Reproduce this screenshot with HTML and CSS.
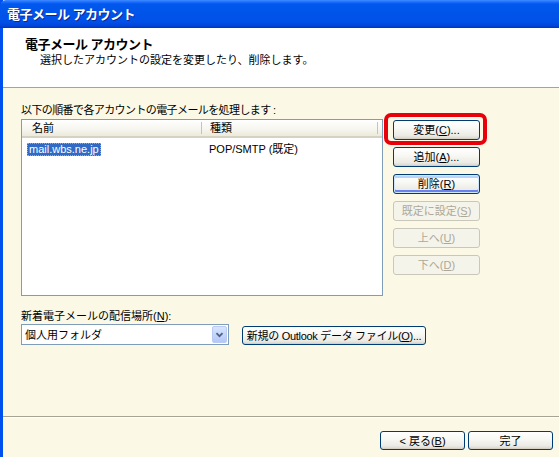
FILE: index.html
```html
<!DOCTYPE html>
<html lang="ja">
<head>
<meta charset="utf-8">
<title>電子メール アカウント</title>
<link rel="stylesheet" href="styles.css">
</head>
<body>
<div class="window">
  <div class="titlebar">電子メール アカウント</div>
  <div class="header">
    <div class="h-title">電子メール アカウント</div>
    <div class="h-sub">選択したアカウントの設定を変更したり、削除します。</div>
  </div>
  <div class="content">
    <div class="label tight">以下の順番で各アカウントの電子メールを処理します :</div>
    <div class="listrow">
      <div class="listbox">
        <div class="lv-head">
          <div class="col c1">名前</div>
          <div class="col c2">種類</div>
          <div class="col c3"></div>
        </div>
        <div class="lv-row">
          <div class="cell c1"><span class="sel">mail.wbs.ne.jp</span></div>
          <div class="cell c2">POP/SMTP (既定)</div>
        </div>
      </div>
      <div class="btncol">
        <div class="hl-wrap">
          <button class="btn">変更(<u>C</u>)...</button>
          <span class="highlight"></span>
        </div>
        <button class="btn">追加(<u>A</u>)...</button>
        <button class="btn default">削除(<u>R</u>)</button>
        <button class="btn" disabled>既定に設定(<u>S</u>)</button>
        <button class="btn" disabled>上へ(<u>U</u>)</button>
        <button class="btn" disabled>下へ(<u>D</u>)</button>
      </div>
    </div>
    <div class="label label2">新着電子メールの配信場所(<u>N</u>):</div>
    <div class="comborow">
      <div class="combo">
        <span class="combo-text">個人用フォルダ</span>
        <span class="combo-btn"><svg width="15" height="17" viewBox="0 0 15 17"><path d="M4 7 L7.5 10.5 L11 7" fill="none" stroke="#4D6185" stroke-width="2"/></svg></span>
      </div>
      <button class="btn wide">新規の Outlook データ ファイル(<u>O</u>)...</button>
    </div>
  </div>
  <div class="footer">
    <button class="btn fbtn">&lt; 戻る(<u>B</u>)</button>
    <button class="btn fbtn">完了</button>
  </div>
</div>
</body>
</html>
```

FILE: styles.css
```css
* { box-sizing: border-box; }
html, body { margin: 0; padding: 0; }
body {
  font-family: "Liberation Sans", "Noto Sans CJK JP", sans-serif;
  font-size: 12px;
  color: #000;
  background: #FBF9E6;
}
.window {
  height: 457px;
  width: 559px;
  display: flex;
  flex-direction: column;
  border-left: 3px solid #0050F0;
  background: #FBF9E6;
  position: relative;
}
.titlebar {
  height: 28px;
  margin-left: -3px;
  padding-left: 7px;
  line-height: 30px;
  font-size: 13px;
  font-weight: bold;
  letter-spacing: -0.5px;
  color: #fff;
  text-shadow: 1px 1px 0 #0A2A9A;
  background: linear-gradient(to bottom, #3D8BFF 0, #1E6CFF 2px, #0058EE 4px, #0054E8 14px, #0050E8 22px, #0044D8 26px, #0033B8 28px);
  border-top-left-radius: 6px;
}
.header {
  height: 60px;
  background: #fff;
  border-bottom: 1px solid #A7A495;
  padding: 9px 0 0 22px;
}
.h-title {
  font-weight: bold;
  font-size: 13px;
  line-height: 16px;
  letter-spacing: -0.5px;
}
.h-sub {
  font-size: 11px;
  line-height: 15px;
  margin-left: 15px;
}
.content {
  flex: 1;
  padding: 14px 0 0 18px;
}
.label {
  font-size: 11px;
  line-height: 16px;
  height: 17px;
  white-space: nowrap;
}
.label.tight { letter-spacing: -0.6px; }
.listrow {
  display: flex;
  gap: 10px;
}
.listbox {
  width: 362px;
  height: 177px;
  background: #fff;
  border: 1px solid #7F9DB9;
}
.lv-head {
  display: flex;
  height: 18px;
  background: linear-gradient(to bottom, #FFFFFF 0, #F6F5EE 60%, #EBEADB 100%);
  border-bottom: 2px solid #D6D2C2;
  font-size: 11px;
  line-height: 16px;
}
.col {
  border-right: 1px solid #C7C5B2;
  margin: 2px 0;
  line-height: 13px;
}
.c1 { width: 180px; padding-left: 10px; }
.c2 { width: 176px; padding-left: 8px; }
.c3 { flex: 1; border-right: none; }
.lv-row {
  display: flex;
  margin-top: 5px;
  font-size: 11px;
  line-height: 13px;
}
.cell.c1 { padding-left: 5px; }
.cell.c2 { padding-left: 7px; }
.sel {
  display: inline-block;
  background: #316AC5;
  color: #fff;
  padding: 0 2px;
  outline: 1px dotted #CFA64B;
  outline-offset: -1px;
}
.btncol {
  display: flex;
  flex-direction: column;
  gap: 7px;
  padding-top: 1px;
}
.btn {
  font-family: inherit;
  font-size: 11px;
  line-height: 14px;
  height: 20px;
  width: 87px;
  padding: 0;
  color: #000;
  white-space: nowrap;
  border: 1px solid #003C74;
  border-radius: 3px;
  background: linear-gradient(to bottom, #FFFFFF 0, #F8F8F4 40%, #ECEBE6 80%, #D8D4CB 100%);
  box-shadow: inset 0 -1px 0 #D6D0C5;
}
.btn.default {
  box-shadow: inset 0 0 0 1px #CEE7FF, inset 0 -2px 0 1px #6982EE, inset 0 2px 0 1px #B7D5FB;
}
.btn:disabled {
  color: #ACA899;
  border-color: #C9C7BA;
  background: #F5F4EA;
  box-shadow: none;
}
.hl-wrap {
  position: relative;
  width: 87px;
  height: 20px;
}
.highlight {
  position: absolute;
  left: -9px;
  top: -7px;
  width: 103px;
  height: 32px;
  border: 4px solid #E8000A;
  border-radius: 7px;
}
.label2 {
  margin-top: 12px;
  height: 16px;
}
.comborow {
  display: flex;
  align-items: flex-end;
  gap: 13px;
}
.combo {
  width: 208px;
  height: 21px;
  background: #fff;
  border: 1px solid #7F9DB9;
  display: flex;
  align-items: center;
  justify-content: space-between;
  padding: 0 1px 0 3px;
}
.combo-text {
  font-size: 11px;
  line-height: 14px;
}
.combo-btn {
  width: 15px;
  height: 17px;
  border-radius: 2px;
  background: linear-gradient(to bottom, #D8E5FD 0, #C1D3FB 60%, #B4C8F6 100%);
  border: 1px solid #B9CBF3;
  display: flex;
  align-items: center;
  justify-content: center;
}
.combo-btn svg { display: block; }
.btn.wide {
  width: 184px;
  height: 19px;
  letter-spacing: -0.3px;
}
.footer {
  height: 41px;
  border-top: 1px solid #A7A495;
  box-shadow: inset 0 1px 0 #FFFFFF;
  display: flex;
  justify-content: flex-end;
  gap: 3px;
  padding: 14px 6px 0 0;
}
.fbtn {
  width: 85px;
  height: 19px;
}
```
